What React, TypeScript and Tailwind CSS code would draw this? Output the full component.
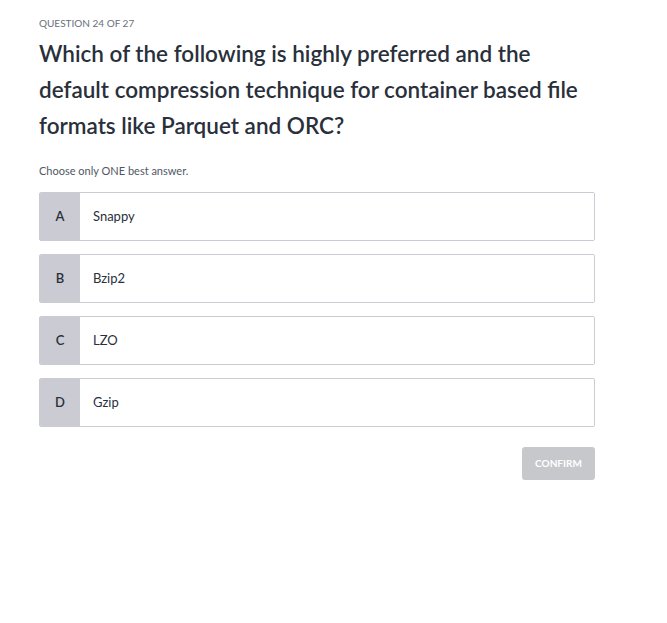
const options = [
  { key: "A", label: "Snappy" },
  { key: "B", label: "Bzip2" },
  { key: "C", label: "LZO" },
  { key: "D", label: "Gzip" },
];

const App: React.FC = () => {
  return (
    <div
      className="min-h-[623px] w-full bg-white text-[#29303b]"
      style={{ fontFamily: "'Source Sans Pro', Lato, 'Open Sans', sans-serif" }}
    >
      <div className="w-[556px] ml-[39px] pt-[17px]">
        <p className="text-[10px] leading-[12px] uppercase text-[#686f7a]">
          Question 24 of 27
        </p>
        <h1 className="mt-[7px] text-[22.5px] leading-[36px] font-semibold text-[#29303b]">
          Which of the following is highly preferred and the default compression
          technique for container based file formats like Parquet and ORC?
        </h1>
        <p className="mt-[20px] text-[11px] leading-[14px] text-[#505763]">
          Choose only ONE best answer.
        </p>

        <div className="mt-[14px] flex flex-col gap-[13px]">
          {options.map((o) => (
            <div
              key={o.key}
              className="flex h-[49px] rounded-[2px] border border-[#cacbd3] overflow-hidden"
            >
              <div className="w-[40px] flex items-center justify-center bg-[#cacbd3] text-[13px] font-semibold text-[#29303b]">
                {o.key}
              </div>
              <div className="flex-1 flex items-center pl-[13px] bg-white text-[13px] text-[#29303b]">
                {o.label}
              </div>
            </div>
          ))}
        </div>

        <div className="mt-[20px] flex justify-end">
          <button className="h-[33px] w-[73px] rounded-[3px] bg-[#c7c8cc] text-white text-[10px] font-bold uppercase">
            Confirm
          </button>
        </div>
      </div>
    </div>
  );
};

export default App;
